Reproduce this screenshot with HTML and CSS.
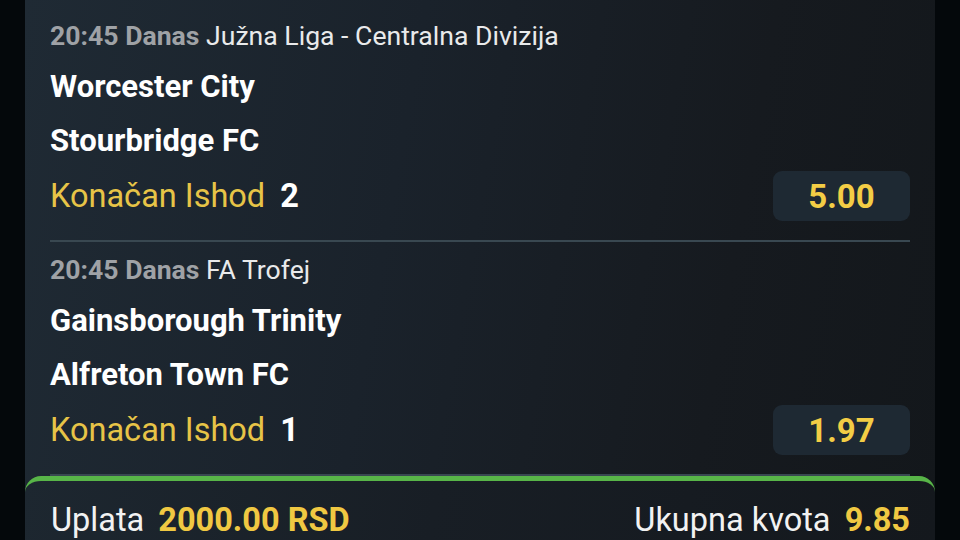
FILE: index.html
```html
<!DOCTYPE html>
<html lang="sr">
<head>
<meta charset="utf-8">
<title>Tiket</title>
<link rel="stylesheet" href="styles.css">
</head>
<body>
<div class="screen">
  <div class="slip">
    <div class="match first">
      <div class="meta"><span class="time">20:45 Danas</span> <span class="league">Južna Liga - Centralna Divizija</span></div>
      <div class="team team-home">Worcester City</div>
      <div class="team">Stourbridge FC</div>
      <div class="pick">
        <div class="market">Konačan Ishod <span class="outcome">2</span></div>
        <div class="odds">5.00</div>
      </div>
    </div>
    <div class="match">
      <div class="meta"><span class="time">20:45 Danas</span> <span class="league">FA Trofej</span></div>
      <div class="team team-home">Gainsborough Trinity</div>
      <div class="team">Alfreton Town FC</div>
      <div class="pick">
        <div class="market">Konačan Ishod <span class="outcome">1</span></div>
        <div class="odds">1.97</div>
      </div>
    </div>
    <div class="summary">
      <div class="sum-item"><span class="sum-label">Uplata</span> <span class="sum-value">2000.00 RSD</span></div>
      <div class="sum-item"><span class="sum-label">Ukupna kvota</span> <span class="sum-value">9.85</span></div>
    </div>
  </div>
</div>
</body>
</html>
```
FILE: styles.css
```css
* { box-sizing: border-box; }
html, body {
  margin: 0;
  padding: 0;
  background: #04080b;
}
body {
  font-family: Roboto, "Noto Sans", "Liberation Sans", sans-serif;
  color: #ffffff;
}
.screen {
  width: 960px;
  height: 540px;
  overflow: hidden;
  padding: 0 25px;
}
.slip {
  height: 540px;
  background: linear-gradient(100deg, #1f2a34 0%, #1a222b 40%, #161a1f 75%, #13171b 100%);
  display: flex;
  flex-direction: column;
}
.match {
  margin: 0 25px;
  padding: 8px 0 17px;
  border-bottom: 2px solid #394851;
}
.match.first {
  padding-top: 16px;
}
.meta {
  height: 40px;
  line-height: 40px;
  font-size: 26.6px;
  white-space: nowrap;
}
.time {
  font-weight: 700;
  color: #9fa2a6;
}
.league {
  color: #e9eaeb;
}
.team {
  height: 54px;
  line-height: 54px;
  font-size: 31px;
  font-weight: 700;
  color: #ffffff;
}
.team-home {
  margin-top: 4px;
}
.pick {
  margin-top: 1px;
  height: 54px;
  display: flex;
  align-items: center;
  justify-content: space-between;
}
.market {
  font-size: 32.5px;
  color: #e7c447;
}
.outcome {
  font-weight: 700;
  color: #ffffff;
  margin-left: 7px;
}
.odds {
  width: 137px;
  height: 50px;
  border-radius: 9px;
  background: #1e2933;
  color: #f3cd45;
  font-size: 33px;
  font-weight: 700;
  display: flex;
  align-items: center;
  justify-content: center;
}
.summary {
  flex: 1;
  border-top: 5px solid #58b548;
  border-radius: 16px 16px 0 0;
  background: linear-gradient(100deg, #1d2730 0%, #181e25 45%, #14181d 100%);
  padding: 21px 25px 0 26px;
  display: flex;
  justify-content: space-between;
  align-items: flex-start;
}
.sum-item {
  font-size: 32.5px;
  line-height: 36px;
  white-space: nowrap;
}
.sum-label {
  color: #f2f2f2;
}
.sum-value {
  font-weight: 700;
  color: #f0c842;
  margin-left: 6px;
}
```
